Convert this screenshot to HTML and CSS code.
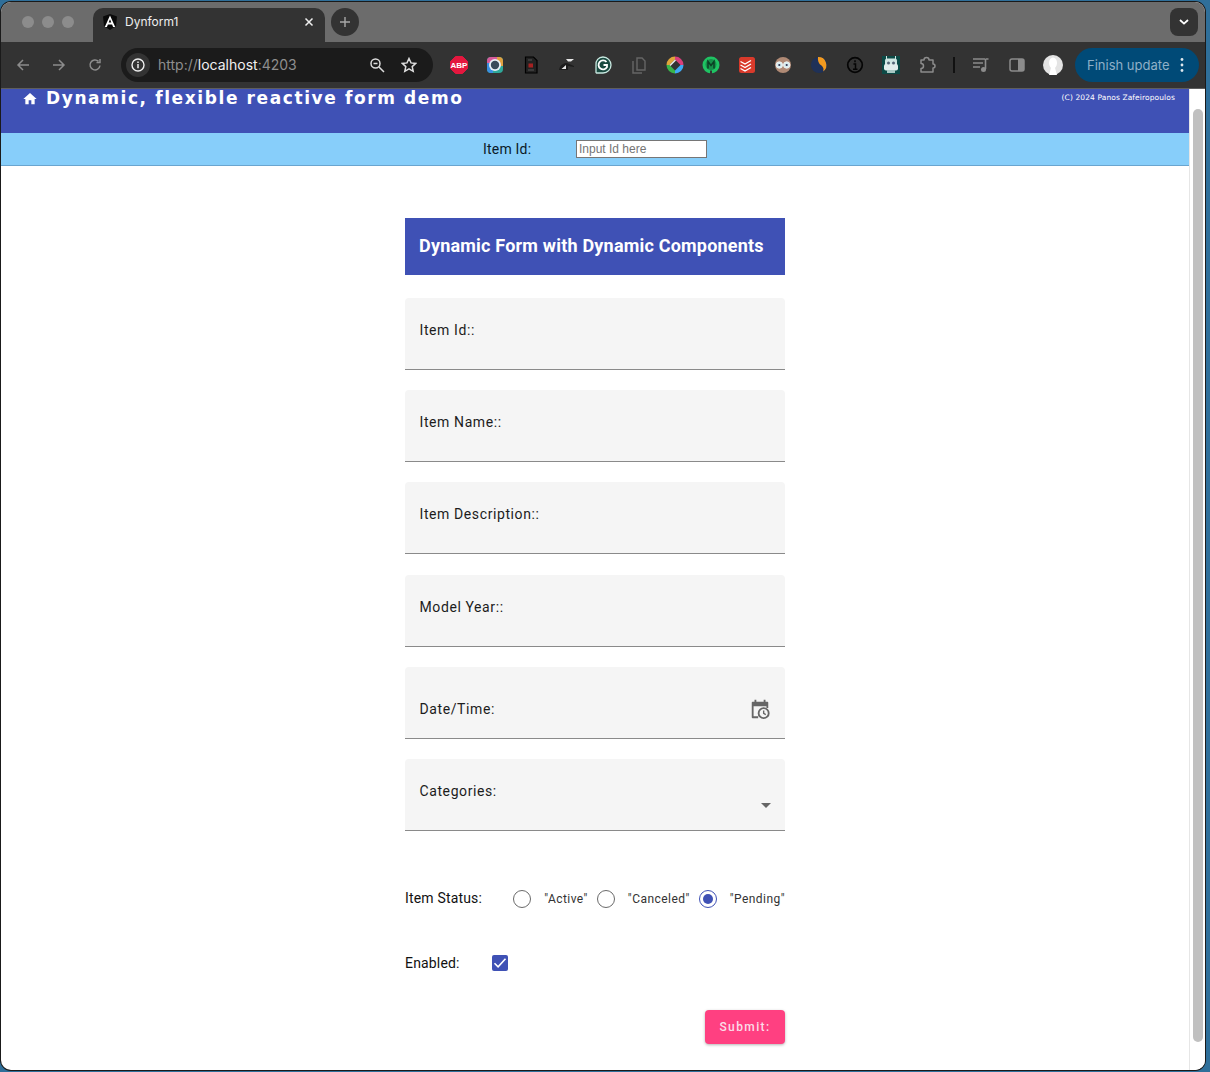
FILE: index.html
```html
<!DOCTYPE html>
<html lang="en">
<head>
<meta charset="utf-8">
<title>Dynform1</title>
<link rel="stylesheet" href="styles.css">
</head>
<body>
<div class="window">
  <div class="tabstrip">
    <div class="lights"><i></i><i></i><i></i></div>
    <div class="tab">
      <svg class="favicon" viewBox="0 0 16 16"><path d="M8 0 1 2.500 2 12l6 4 6-4 1-9.500z" fill="#0a0a0a"/><path d="M8 1.500 2.800 13h2.100l1-2.600h4.200l1 2.600h2.100zM6.700 8.600 8 5.300l1.300 3.300z" fill="#fff"/></svg>
      <span class="tab-title">Dynform1</span>
      <svg class="tab-close" viewBox="0 0 10 10"><path d="M1.500 1.500l7 7M8.500 1.500l-7 7" stroke="#eee" stroke-width="1.500"/></svg>
    </div>
    <div class="newtab"><svg viewBox="0 0 12 12"><path d="M6 1v10M1 6h10" stroke="#a8a8a8" stroke-width="1.400"/></svg></div>
    <div class="spacer"></div>
    <div class="tabmenu"><svg viewBox="0 0 10 6"><path d="M1 1l4 3.600L9 1" fill="none" stroke="#fff" stroke-width="1.800"/></svg></div>
  </div>
  <div class="toolbar">
    <svg class="nav" viewBox="0 0 16 16"><path d="M14 8H3M8 3 3 8l5 5" fill="none" stroke="#8c8c8c" stroke-width="1.500"/></svg>
    <svg class="nav" viewBox="0 0 16 16"><path d="M2 8h11M8 3l5 5-5 5" fill="none" stroke="#8c8c8c" stroke-width="1.500"/></svg>
    <svg class="nav" viewBox="0 0 16 16"><path d="M13 8.500A5 5 0 1 1 11.500 4.300M13 2v3.500H9.500" fill="none" stroke="#8c8c8c" stroke-width="1.500"/></svg>
    <div class="omnibox">
      <span class="site-info"><svg viewBox="0 0 16 16"><circle cx="8" cy="8" r="6" fill="none" stroke="#eee" stroke-width="1.400"/><path d="M8 7v4.300M8 4.400v1.500" stroke="#eee" stroke-width="1.500"/></svg></span>
      <span class="url">http://<b>localhost</b>:4203</span>
      <svg class="omni-icon zoom-ic" viewBox="0 0 16 16"><circle cx="6.500" cy="6.500" r="4.500" fill="none" stroke="#ddd" stroke-width="1.500"/><path d="M10 10l5 5M4.500 6.500h4" stroke="#ddd" stroke-width="1.500"/></svg>
      <svg class="omni-icon star" viewBox="0 0 16 16"><path d="M8 1.500l2 4.400 4.800.5-3.600 3.200 1 4.700L8 11.900l-4.200 2.400 1-4.700L1.200 6.400 6 5.900z" fill="none" stroke="#ddd" stroke-width="1.500"/></svg>
    </div>
    <div class="exts">
      <svg class="ext" viewBox="0 0 18 18"><path d="M5.500 .5h7l5 5v7l-5 5h-7l-5-5v-7z" fill="#e3173e" stroke="#e3173e" stroke-linejoin="round"/><text x="9" y="12" class="abp">ABP</text></svg>
      <svg class="ext" viewBox="0 0 18 18"><rect x="1" y="1" width="16" height="16" rx="4" fill="#2fa89a"/><path d="M5 1h6v6H1V5a4 4 0 0 1 4-4z" fill="#d65a9a"/><path d="M11 1h2a4 4 0 0 1 4 4v5h-6z" fill="#e0a040"/><path d="M1 7h6v10H5a4 4 0 0 1-4-4z" fill="#3a8fe0"/><circle cx="9" cy="9" r="6" fill="#e8eef5"/><circle cx="9" cy="9" r="4.200" fill="#3a4a5a"/></svg>
      <svg class="ext" viewBox="0 0 18 18"><path d="M3.500 1h8L15 4.500V17H3.500z" fill="#222" stroke="#000" stroke-width="1.200"/><rect x="6.500" y="7.500" width="4.500" height="4" fill="#a52222"/><path d="M6 4h4M6 14h6" stroke="#555"/></svg>
      <svg class="ext" viewBox="0 0 18 18"><path d="M1 14c1-5 4-7 8-7l7 3v1l-6-1v4H2z" fill="#1c1c1c"/><path d="M8 3h8l-3 2.500h-3zM3.500 13l4.500-4V13z" fill="#e8e8e8"/></svg>
      <svg class="ext" viewBox="0 0 18 18"><path d="M9 1a8 8 0 1 1 0 16H2.500l-.5-.500V9a7 7 0 0 1 7-8z" fill="#1a4a40" stroke="#c8e8e0" stroke-width="1.300"/><path d="M12.500 6A4.500 4.500 0 1 0 13 11V9H9.500" fill="none" stroke="#fff" stroke-width="1.800"/></svg>
      <svg class="ext" viewBox="0 0 18 18"><path d="M7 2h5l3 3v9H7z" fill="none" stroke="#666" stroke-width="1.400"/><path d="M3 5v12h9" fill="none" stroke="#666" stroke-width="1.400"/></svg>
      <svg class="ext" viewBox="0 0 18 18"><path d="M9 9V.5A8.500 8.500 0 0 1 17.500 9z" fill="#d93f7b"/><path d="M9 9h8.500A8.500 8.500 0 0 1 9 17.500z" fill="#3fa9f5"/><path d="M9 9v8.500A8.500 8.500 0 0 1 .5 9z" fill="#39b54a"/><path d="M9 9H.5A8.500 8.500 0 0 1 9 .5z" fill="#e0a53a"/><path d="M9 3.500 14.500 9 9 14.500 3.500 9z" fill="#333"/><path d="M3.500 9 9 3.500 10 4.500 4.500 10z" fill="#eee"/></svg>
      <svg class="ext" viewBox="0 0 18 18"><circle cx="9" cy="9" r="8.500" fill="#1fc363"/><circle cx="9" cy="8.500" r="5.500" fill="#168f49"/><path d="M6 12.500V5.500l3 4 3-4v7" fill="none" stroke="#0b3f25" stroke-width="1.500"/><path d="M8 14.500h2V18H8z" fill="#333"/></svg>
      <svg class="ext" viewBox="0 0 18 18"><rect x="1" y="1" width="16" height="16" rx="2.500" fill="#d93a2b"/><path d="M2.500 5.500 7 8l6-3.500M2.500 9 7 11.500l6-3.500M2.500 12.500 7 15l6-3.500" fill="none" stroke="#fff" stroke-width="1.400"/></svg>
      <svg class="ext" viewBox="0 0 18 18"><circle cx="9" cy="9" r="8" fill="#b08a75"/><circle cx="5.300" cy="9" r="3.200" fill="#d8eef0" stroke="#eee"/><circle cx="12.700" cy="9" r="3.200" fill="#d8eef0" stroke="#eee"/><circle cx="5.300" cy="9" r="1.100" fill="#335"/><circle cx="12.700" cy="9" r="1.100" fill="#335"/></svg>
      <svg class="ext" viewBox="0 0 18 18"><circle cx="9" cy="9" r="8" fill="#1f3158"/><path d="M8 1a8 8 0 0 1 5 14.500c1.500-3-.5-5.500-3-7C8.500 7 7.500 4 8 1z" fill="#f29a1f"/></svg>
      <svg class="ext" viewBox="0 0 18 18"><circle cx="9" cy="9" r="7.300" fill="none" stroke="#050505" stroke-width="1.700"/><path d="M7.500 8h2v5M7 13.200h4.500M9 4.300v2" fill="none" stroke="#050505" stroke-width="1.500"/></svg>
      <svg class="ext" viewBox="0 0 18 18"><rect width="18" height="18" fill="#0c4a46"/><rect x="3" y="2.500" width="12" height="8" rx="2" fill="#cfe6e2"/><rect x="2" y="8" width="14" height="6.500" rx="2" fill="#e2eeec"/><rect x="5" y="14" width="8" height="3" fill="#a8c8c4"/><circle cx="6.500" cy="7" r="1.500" fill="#567"/><circle cx="11.500" cy="7" r="1.500" fill="#567"/><path d="M4.500 0v3M13.500 0v3" stroke="#cfe6e2"/></svg>
      <svg class="ext" viewBox="0 0 18 18"><path d="M3 4h3a2.500 2.500 0 0 1 5 0h4v4a2 2 0 0 1 0 4v4H3v-3.500a2.500 2.500 0 0 0 0-5z" fill="none" stroke="#8c8c8c" stroke-width="1.500" stroke-linejoin="round"/></svg>
      <div class="divider"></div>
      <svg class="ext" viewBox="0 0 18 18"><path d="M1 3h12M1 7h10M1 11h7" stroke="#8c8c8c" stroke-width="1.600"/><path d="M13.500 3h3M13.500 3v10" stroke="#8c8c8c" stroke-width="1.600"/><circle cx="11.500" cy="13.500" r="2.500" fill="#8c8c8c"/></svg>
      <svg class="ext" viewBox="0 0 18 18"><rect x="2" y="3" width="14" height="12" rx="2" fill="none" stroke="#8c8c8c" stroke-width="1.500"/><rect x="10" y="3" width="6" height="12" fill="#8c8c8c"/></svg>
      <svg class="ext avatar" viewBox="0 0 20 20"><circle cx="10" cy="10" r="10" fill="#e4e4e4"/><ellipse cx="10" cy="8" rx="4" ry="5.500" fill="#fff"/><path d="M6 20l2-7h4l2 7z" fill="#fff"/></svg>
    </div>
    <div class="update"><span>Finish update</span><svg viewBox="0 0 4 16"><circle cx="2" cy="2.500" r="1.400" fill="#dfe8ee"/><circle cx="2" cy="8" r="1.400" fill="#dfe8ee"/><circle cx="2" cy="13.500" r="1.400" fill="#dfe8ee"/></svg></div>
  </div>
  <div class="viewport">
    <div class="page">
      <header class="app-header">
        <div class="brand">
          <svg class="home" viewBox="0 0 24 24"><path d="M10 20v-6h4v6h5v-8h3L12 3 2 12h3v8z" fill="#fff"/></svg>
          <span class="brand-title">Dynamic, flexible reactive form demo</span>
        </div>
        <span class="copyright">(C) 2024 Panos Zafeiropoulos</span>
      </header>
      <div class="idbar">
        <label class="idbar-label" for="lookup">Item Id:</label>
        <input class="idbar-input" id="lookup" placeholder="Input Id here">
      </div>
      <main class="form">
        <h1 class="form-title">Dynamic Form with Dynamic Components</h1>
        <div class="field"><span class="field-label">Item Id::</span></div>
        <div class="field"><span class="field-label">Item Name::</span></div>
        <div class="field"><span class="field-label">Item Description::</span></div>
        <div class="field"><span class="field-label">Model Year::</span></div>
        <div class="field field-date">
          <span class="field-label">Date/Time:</span>
          <svg class="date-icon" viewBox="0 0 24 24"><path d="M4 4h16a1 1 0 0 1 1 1v6h-2V9H5v11h5v2H4a1 1 0 0 1-1-1V5a1 1 0 0 1 1-1z" fill="#666"/><path d="M6 2h2v3H6zM16 2h2v3h-2z" fill="#666"/><circle cx="16" cy="16.500" r="5.500" fill="none" stroke="#666" stroke-width="2"/><path d="M16 13.500v3.300l2.300 1.300" fill="none" stroke="#666" stroke-width="1.500"/></svg>
        </div>
        <div class="field field-select">
          <span class="field-label">Categories:</span>
          <span class="select-arrow"></span>
        </div>
        <div class="status-row">
          <span class="row-label">Item Status:</span>
          <div class="radios">
            <span class="radio"></span><span class="radio-text">"Active"</span>
            <span class="radio"></span><span class="radio-text">"Canceled"</span>
            <span class="radio radio-on"></span><span class="radio-text">"Pending"</span>
          </div>
        </div>
        <div class="enabled-row">
          <span class="row-label">Enabled:</span>
          <span class="checkbox"><svg viewBox="0 0 16 16"><path d="M2.500 8.200l3.600 3.600 7.400-8" fill="none" stroke="#fff" stroke-width="1.600"/></svg></span>
        </div>
        <div class="actions"><button class="submit" type="button">Submit:</button></div>
      </main>
    </div>
    <div class="scrollbar"><div class="thumb"></div></div>
  </div>
</div>
</body>
</html>
```
FILE: styles.css
```css
* { box-sizing: border-box; }
html, body { margin: 0; height: 100%; overflow: hidden; }
body {
  background: #2f6f9a;
  padding: 2px 5px 2px 1px;
  font-family: Roboto, "Liberation Sans", sans-serif;
}
.window {
  height: 1068px;
  width: 1204px;
  border-radius: 10px;
  overflow: hidden;
  display: flex;
  flex-direction: column;
  background: #fff;
  box-shadow: 0 0 0 1px #1a1a1a;
}
.tabstrip {
  height: 40px;
  flex: none;
  background: #6c6c6c;
  display: flex;
  align-items: flex-end;
  padding-right: 7px;
}
.lights { display: flex; gap: 8px; padding: 0 0 14px 21px; width: 92px; flex: none; }
.lights i { width: 12px; height: 12px; border-radius: 50%; background: #8c8c8c; }
.tab {
  width: 232px;
  height: 34px;
  flex: none;
  background: #333;
  border-radius: 10px 10px 0 0;
  display: flex;
  align-items: center;
  padding: 0 11px 7px 9px;
  color: #eee;
  font-size: 12px;
}
.favicon { width: 16px; height: 16px; margin-right: 7px; }
.tab-title { flex: 1; font-family: Inter, Roboto, sans-serif; }
.tab-close { width: 10px; height: 10px; }
.newtab {
  width: 28px; height: 28px; border-radius: 50%; background: #333;
  margin: 0 0 6px 6px; display: flex; align-items: center; justify-content: center;
}
.newtab svg { width: 12px; height: 12px; }
.spacer { flex: 1; }
.tabmenu {
  width: 28px; height: 28px; border-radius: 8px; background: #333;
  margin-bottom: 6px; display: flex; align-items: center; justify-content: center;
}
.tabmenu svg { width: 10px; height: 6px; }
.toolbar {
  height: 47px;
  flex: none;
  background: #333;
  border-bottom: 1px solid #5e5e5e;
  display: flex;
  align-items: center;
  padding: 0 5px 1px 14px;
}
.nav { width: 16px; height: 16px; margin-right: 20px; flex: none; }
.omnibox {
  width: 312px; height: 34px; margin-left: -2px; flex: none;
  background: #1b1b1b; border-radius: 17px;
  display: flex; align-items: center; padding: 0 16px 0 5px;
}
.site-info {
  width: 24px; height: 24px; border-radius: 50%; background: #333;
  display: flex; align-items: center; justify-content: center; flex: none;
}
.site-info svg { width: 16px; height: 16px; }
.url { flex: 1; margin-left: 8px; font-size: 14px; color: #8e8e8e; font-family: Inter, sans-serif; letter-spacing: 0; }
.url b { font-weight: 400; color: #f0f0f0; }
.omni-icon { width: 16px; height: 16px; flex: none; }
.zoom-ic { margin-right: 16px; }
.exts { display: flex; align-items: center; gap: 18px; margin-left: 17px; flex: none; }
.ext { width: 18px; height: 18px; flex: none; }
.abp { font: 700 8px "Liberation Sans", sans-serif; fill: #fff; text-anchor: middle; }
.avatar { width: 20px; height: 20px; margin-left: -1px; }
.divider { width: 2px; height: 16px; background: #111; margin: 0 -1px; }
.update {
  width: 124px; height: 34px; margin-left: 12px; flex: none;
  background: #004a77; border-radius: 17px;
  display: flex; align-items: center; justify-content: space-between;
  padding: 0 15px 0 12px;
  color: #8fb0c8; font-size: 13px; font-family: Inter, Roboto, sans-serif;
}
.update svg { width: 4px; height: 16px; }
.viewport { flex: 1; display: flex; min-height: 0; }
.page { flex: 1; min-width: 0; border-right: 1px solid #e6e6e6; }
.scrollbar { width: 15px; flex: none; padding: 20px 2px 0 3px; background: #fff; }
.thumb { height: 933px; background: #c0c0c0; border-radius: 5px; }
.app-header {
  height: 44px;
  background: #3f51b5;
  display: flex;
  justify-content: space-between;
  align-items: flex-start;
  color: #fff;
  padding: 0 14px 0 21px;
}
.brand { display: flex; align-items: center; gap: 8px; }
.home { width: 16px; height: 16px; margin-top: 2px; }
.brand-title {
  font: 700 17px/18px "DejaVu Sans", sans-serif;
  letter-spacing: 1.600px;
  white-space: nowrap;
}
.copyright { font: 7.500px/18px "DejaVu Sans", sans-serif; letter-spacing: .1px; }
.idbar {
  height: 33px;
  background: #87cefa;
  border-bottom: 1px solid #6aa5cf;
  display: flex;
  align-items: center;
  padding-left: 482px;
}
.idbar-label { width: 93px; font-size: 14px; letter-spacing: .2px; color: #0b1a28; }
.idbar-input {
  width: 131px; height: 18px;
  border: 1px solid #767676; border-radius: 0;
  padding: 0 2px; background: #fff;
  font: 12px "Liberation Sans", sans-serif;
}
.idbar-input::placeholder { color: #757575; opacity: 1; }
.form { width: 380px; margin: 52px 0 0 404px; }
.form-title {
  height: 57px; margin: 0 0 22.750px;
  background: #3f51b5; color: #fff;
  font-size: 18px; font-weight: 700; line-height: 55px; letter-spacing: .2px;
  padding-left: 14px; white-space: nowrap;
}
.field {
  height: 72px;
  margin-bottom: 20.250px;
  background: #f5f5f5;
  border-bottom: 1px solid #8a8a8a;
  border-radius: 4px 4px 0 0;
  padding: 24px 15px 0;
  position: relative;
}
.field-label { font-size: 14px; line-height: 16px; letter-spacing: .6px; color: #1c1c1c; display: block; margin-left: -.5px; }
.field-date { padding-top: 34px; }
.date-icon { position: absolute; right: 14px; top: 31px; width: 22px; height: 22px; }
.field-select { padding-top: 24px; margin-bottom: 0; }
.select-arrow {
  position: absolute; right: 14px; top: 44px;
  border: 5px solid transparent; border-top-color: #666; border-bottom: 0;
}
.status-row { display: flex; align-items: center; justify-content: space-between; height: 20px; margin-top: 57.250px; }
.row-label { font-size: 14px; letter-spacing: .17px; color: #111; }
.radios { display: flex; align-items: center; padding-top: 2px; }
.radio { width: 18px; height: 18px; border-radius: 50%; border: 1.500px solid #6a6a6a; margin-right: 13px; background: #fff; }
.radio-text { font-size: 12px; letter-spacing: .45px; color: #333; margin-right: 9px; }
.radio-text:last-child { margin-right: 0; }
.radio-on { border-color: #3f51b5; position: relative; }
.radio-on::after {
  content: ""; position: absolute; inset: 3px;
  border-radius: 50%; background: #3f51b5;
}
.enabled-row { display: flex; align-items: center; height: 18px; margin-top: 46px; }
.enabled-row .row-label { width: 87px; }
.checkbox { width: 16px; height: 16px; border-radius: 2px; background: #3f51b5; display: block; }
.checkbox svg { width: 16px; height: 16px; display: block; }
.actions { display: flex; justify-content: flex-end; margin-top: 38px; }
.submit {
  width: 80px; height: 34px;
  border: 0; border-radius: 4px;
  background: #ff4081; color: #fbdde8;
  font: 500 12px Roboto, sans-serif; letter-spacing: 1.400px;
  box-shadow: 0 1px 3px rgba(0,0,0,.3);
}
```
